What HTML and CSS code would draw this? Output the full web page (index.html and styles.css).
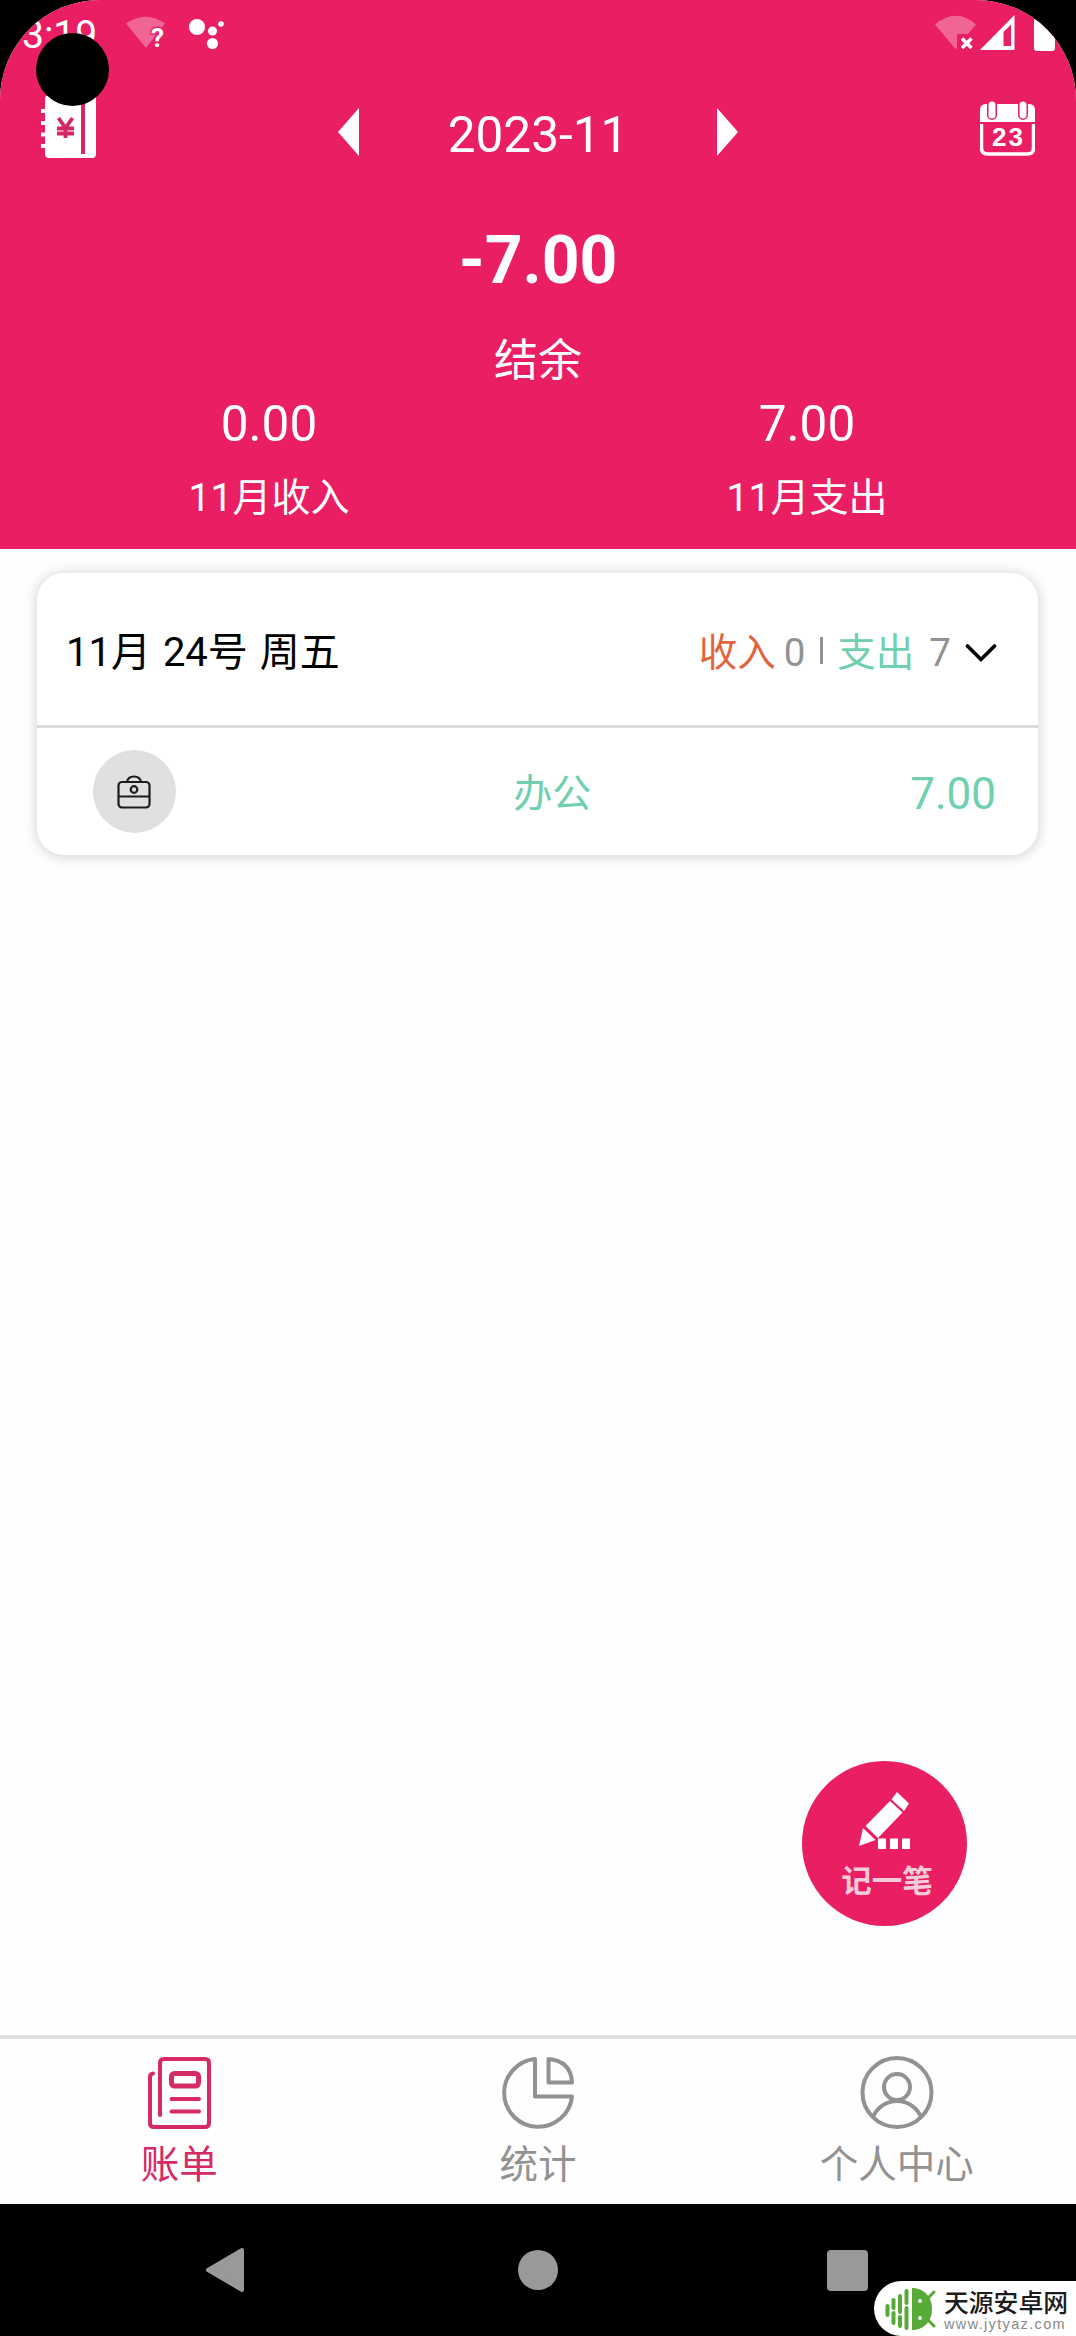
FILE: index.html
```html
<!DOCTYPE html>
<html lang="zh-CN">
<head>
    <meta charset="UTF-8">
    <meta name="viewport" content="width=device-width, initial-scale=1.0">
    <title>账单</title>
    <link rel="stylesheet" href="styles.css">
</head>
<body>
    <div class="screen">
        <header class="header">
            <div class="status-bar">
                <span class="time">3:19</span>
                <svg class="wifi-unknown" width="46" height="44" viewBox="0 0 46 44">
                    <path d="M0 9.500Q20-4 39 9.500L20 34Z" fill="#f16596"/>
                    <text x="25" y="33" class="question">?</text>
                </svg>
                <svg class="dots" width="36" height="32" viewBox="0 0 36 32" fill="#fff">
                    <circle cx="8" cy="9" r="8"/>
                    <circle cx="23.5" cy="13" r="4.5"/>
                    <circle cx="32" cy="6" r="2.8"/>
                    <circle cx="23.5" cy="25.5" r="5.5"/>
                </svg>
                <div class="status-right">
                    <svg width="42" height="36" viewBox="0 0 42 36">
                        <path d="M0 9.500Q21-8 41 9.500L33 19H22V33L20.500 34Z" fill="#f16596"/>
                        <path d="M27 23.500L36.500 33M36.500 23.500L27 33" stroke="#fff" stroke-width="3.600"/>
                    </svg>
                    <svg class="signal" width="35" height="36" viewBox="0 0 35 36">
                        <path fill="#fff" fill-rule="evenodd" d="M0 35L34.500 0V35ZM23.500 17V31H31V9.500Z"/>
                    </svg>
                    <span class="battery"></span>
                </div>
            </div>

            <div class="title-row">
                <svg class="book" width="55" height="63" viewBox="0 0 55 63">
                    <rect x="4" y="0" width="51" height="63" rx="4" fill="#fff"/>
                    <path d="M0 16H8M0 28H8M0 39.500H8M0 51H8" stroke="#fff" stroke-width="4"/>
                    <path d="M42 4V59" stroke="#d42765" stroke-width="4"/>
                    <path d="M17.500 23L24.500 33L31.500 23M16 33.500H33M16 38.500H33M24.500 33V43" fill="none" stroke="#d42765" stroke-width="3.800"/>
                </svg>
                <div class="month-picker">
                    <svg width="21" height="48" viewBox="0 0 21 48"><path d="M0 24L21 0V48Z" fill="#fff"/></svg>
                    <span class="month">2023-11</span>
                    <svg width="21" height="48" viewBox="0 0 21 48"><path d="M21 24L0 0V48Z" fill="#fff"/></svg>
                </div>
                <svg class="calendar" width="55" height="55" viewBox="0 0 55 55">
                    <path d="M0 21V9Q0 3 6 3H49Q55 3 55 9V21Z" fill="#fff"/>
                    <path d="M1.500 23V47Q1.500 53 8 53H47Q53.500 53 53.500 47V23" fill="none" stroke="#fff" stroke-width="3.500"/>
                    <path d="M12 4V14M43 4V14" stroke="#e91e63" stroke-width="10" stroke-linecap="round"/>
                    <path d="M12 4V14M43 4V14" stroke="#fff" stroke-width="7" stroke-linecap="round"/>
                    <text x="28.500" y="44.500" class="calendar-day">23</text>
                </svg>
            </div>

            <div class="balance">-7.00</div>
            <div class="balance-label">结余</div>
            <div class="totals">
                <div class="total">
                    <div class="total-value">0.00</div>
                    <div class="total-label">11月收入</div>
                </div>
                <div class="total">
                    <div class="total-value">7.00</div>
                    <div class="total-label">11月支出</div>
                </div>
            </div>
        </header>

        <main class="content">
            <section class="card">
                <div class="card-head">
                    <span class="date">11月 24号 周五</span>
                    <div class="day-total">
                        <span class="income">收入</span>
                        <span class="income-value">0</span>
                        <span class="separator"></span>
                        <span class="expense">支出</span>
                        <span class="expense-value">7</span>
                        <svg class="chevron" width="32" height="20" viewBox="0 0 32 20"><path d="M2.500 3L16 16.500L29.500 3" fill="none" stroke="#000" stroke-width="3.600" stroke-linecap="round"/></svg>
                    </div>
                </div>
                <div class="record">
                    <div class="record-icon">
                        <svg width="34" height="34" viewBox="0 0 34 34" fill="none" stroke="#1c1c1c" stroke-width="2.200">
                            <rect x="1.500" y="7" width="31" height="25.500" rx="3.500"/>
                            <path d="M1.500 21.500H32.500M10 7Q11 1.500 17 1.500Q23 1.500 24 7"/>
                            <circle cx="17" cy="14.500" r="3.300"/>
                        </svg>
                    </div>
                    <span class="record-name">办公</span>
                    <span class="record-amount">7.00</span>
                </div>
            </section>

            <div class="add-button">
                <svg width="52" height="58" viewBox="0 0 52 58" fill="#fff">
                    <path d="M38 0L50 11.500L45 19L32.500 7.500Z"/>
                    <path d="M31 9L43.500 20.500L19 46L6.500 34Z"/>
                    <path d="M4 36L16.500 48L0 54Z"/>
                    <path d="M19 46.500H27V57H19ZM31 46.500H39V57H31ZM43 46.500H51V57H43Z"/>
                </svg>
                <span class="add-label">记一笔</span>
            </div>
        </main>

        <nav class="tabs">
            <div class="tab active">
                <svg width="74" height="74" viewBox="0 0 74 74" fill="none" stroke="currentColor" stroke-width="4" stroke-linecap="round" stroke-linejoin="round">
                    <path d="M18 60V8Q18 4 22 4H63Q67 4 67 8V68Q67 72 63 72H12Q8 72 8 68V22Q8 19 11 18.500"/>
                    <rect x="29.500" y="18.500" width="27" height="12.500" rx="3" stroke-width="5"/>
                    <path d="M29.500 44H57M29.500 56.500H57"/>
                </svg>
                <span class="tab-label">账单</span>
            </div>
            <div class="tab">
                <svg width="74" height="74" viewBox="0 0 74 74" fill="none" stroke="currentColor" stroke-width="4" stroke-linejoin="round">
                    <path d="M34 4V41.500H71A34 34 0 1 1 34 4Z"/>
                    <path d="M47.500 4V27.500H71Q70 6 47.500 4Z"/>
                </svg>
                <span class="tab-label">统计</span>
            </div>
            <div class="tab">
                <svg width="74" height="74" viewBox="0 0 74 74" fill="none" stroke="currentColor" stroke-width="4">
                    <circle cx="37" cy="37.500" r="34.500"/>
                    <circle cx="37" cy="32" r="13"/>
                    <path d="M13 62A26 26 0 0 1 61 62"/>
                </svg>
                <span class="tab-label">个人中心</span>
            </div>
        </nav>

        <div class="camera"></div>
    </div>

    <footer class="system-nav">
        <svg width="40" height="46" viewBox="0 0 40 46"><path d="M3 23L37 3V43Z" fill="#999" stroke="#999" stroke-width="4" stroke-linejoin="round"/></svg>
        <span class="home"></span>
        <span class="recent"></span>
        <div class="watermark">
            <svg width="52" height="44" viewBox="0 0 52 44">
                <path d="M27 1C40 1 47 11 47 22S40 43 27 43Z" fill="#56aa35"/>
                <path d="M42 12L49 5M42 32L49 39" stroke="#56aa35" stroke-width="3" stroke-linecap="round"/>
                <path d="M2.500 19V28M8.500 13V21M8.500 26V36M15 9V25M15 30V39M21.500 4V16M21.500 21V41" stroke="#56aa35" stroke-width="4" stroke-linecap="round"/>
                <circle cx="35" cy="14" r="2" fill="#fff"/>
                <circle cx="35" cy="31" r="2" fill="#fff"/>
            </svg>
            <div class="watermark-text">
                <span class="site-name">天源安卓网</span>
                <span class="site-url">www.jytyaz.com</span>
            </div>
        </div>
    </footer>
</body>
</html>
```

FILE: styles.css
```css
* {
    box-sizing: border-box;
}
body {
    font-family: Roboto, "Noto Sans CJK SC", sans-serif;
    margin: 0;
    background-color: #000;
    height: 2336px;
    overflow: hidden;
}
svg {
    display: block;
    flex-shrink: 0;
}
.screen {
    position: relative;
    display: flex;
    flex-direction: column;
    height: 2204px;
    background-color: #fefefe;
    border-radius: 100px 100px 0 0;
    overflow: hidden;
}

/* header */
.header {
    height: 549px;
    background-color: #e91e63;
    color: #fff;
    text-align: center;
}
.status-bar {
    display: flex;
    height: 70px;
    padding-left: 22px;
}
.time {
    width: 104px;
    font-size: 39px;
    line-height: 70px;
    text-align: left;
}
.wifi-unknown {
    margin-top: 14px;
}
.question {
    font-size: 26px;
    font-weight: 700;
    fill: #fff;
    stroke: #e91e63;
    stroke-width: 3px;
    paint-order: stroke;
}
.dots {
    margin: 18px 0 0 17px;
}
.status-right {
    display: flex;
    margin: 15px 21px 0 auto;
}
.signal {
    margin-left: 3px;
}
.battery {
    width: 21px;
    height: 33px;
    margin: 3px 0 0 19px;
    background-color: #fff;
    border-radius: 3px;
}
.title-row {
    display: flex;
    justify-content: space-between;
    align-items: center;
    height: 124px;
    padding: 0 41px;
}
.book {
    margin-bottom: 11px;
}
.calendar {
    margin-bottom: 7px;
}
.calendar-day {
    font-family: "Liberation Sans", sans-serif;
    font-size: 26px;
    font-weight: 700;
    letter-spacing: 2px;
    text-anchor: middle;
    fill: #fff;
}
.month-picker {
    display: flex;
    justify-content: space-between;
    align-items: center;
    width: 400px;
}
.month {
    padding-top: 6px;
    font-size: 49.5px;
    line-height: 60px;
}
.balance {
    font-size: 66px;
    font-weight: 700;
    line-height: 134px;
}
.balance-label {
    font-size: 44px;
    line-height: 66px;
}
.totals {
    display: flex;
}
.total {
    flex: 1;
}
.total-value {
    font-size: 49.5px;
    line-height: 60px;
}
.total-label {
    font-size: 39px;
    line-height: 88px;
}

/* bill list */
.content {
    position: relative;
    flex: 1;
    padding: 24px 38px 0 37px;
}
.card {
    height: 282px;
    background-color: #fff;
    border-radius: 27px;
    box-shadow: 0 1px 12px 2px rgba(0, 0, 0, 0.15);
}
.card-head {
    display: flex;
    justify-content: space-between;
    align-items: center;
    height: 155px;
    padding: 7px 41px 0 29px;
    border-bottom: 3px solid #dadada;
}
.date {
    font-size: 40px;
    line-height: 60px;
    word-spacing: 2px;
    color: #000;
}
.day-total {
    display: flex;
    align-items: center;
    font-size: 38.5px;
    line-height: 60px;
    color: #929292;
}
.income {
    color: #e0653f;
}
.income-value {
    margin-left: 8px;
}
.separator {
    width: 3px;
    height: 27px;
    margin: 0 14px 5px 15px;
    background-color: #929292;
}
.expense,
.record {
    color: #6fcfae;
}
.expense-value {
    margin: 0 14px 0 15px;
}
.record {
    display: flex;
    align-items: center;
    height: 127px;
    padding: 0 42px 0 55.5px;
}
.record-icon {
    display: flex;
    justify-content: center;
    align-items: center;
    width: 83px;
    height: 83px;
    background-color: #e0e0e0;
    border-radius: 50%;
}
.record-name {
    flex: 1;
    padding: 4px 0 0 19px;
    font-size: 39px;
    text-align: center;
    line-height: 60px;
}
.record-amount {
    padding-top: 4px;
    font-size: 44px;
    line-height: 60px;
}
.add-button {
    position: absolute;
    right: 109px;
    bottom: 109px;
    display: flex;
    flex-direction: column;
    align-items: center;
    width: 165px;
    height: 165px;
    padding: 31px 0 0 1px;
    background-color: #e91e63;
    border-radius: 50%;
}
.add-label {
    margin-left: 4px;
    font-size: 30.5px;
    font-weight: 700;
    line-height: 64px;
    color: #f8cbd9;
}

/* bottom tabs */
.tabs {
    display: flex;
    height: 169px;
    border-top: 4px solid #e0e0e0;
}
.tab {
    flex: 1;
    display: flex;
    flex-direction: column;
    align-items: center;
    padding-top: 16px;
    color: #929292;
}
.tab.active {
    color: #d62a66;
}
.tab-label {
    font-size: 38.5px;
    line-height: 71px;
}

/* camera cutout */
.camera {
    position: absolute;
    top: 33px;
    left: 36px;
    width: 73px;
    height: 73px;
    background-color: #000;
    border-radius: 50%;
}

.system-nav {
    position: relative;
    display: flex;
    justify-content: space-between;
    align-items: center;
    height: 132px;
    padding: 0 208px 0 205px;
}
.home {
    width: 40px;
    height: 40px;
    margin-left: 3px;
    background-color: #999;
    border-radius: 50%;
}
.recent {
    width: 41px;
    height: 41px;
    background-color: #999;
    border-radius: 4px;
}
.watermark {
    position: absolute;
    right: 0;
    bottom: 0;
    display: flex;
    width: 202px;
    height: 55px;
    padding: 6px 0 0 11px;
    background-color: #fff;
    border-radius: 28px 0 0 28px;
}
.watermark-text {
    display: flex;
    flex-direction: column;
    padding-left: 7px;
}
.site-name {
    font-size: 24.8px;
    font-weight: 500;
    line-height: 34px;
    color: #1c1c1c;
}
.site-url {
    font-family: "Liberation Sans", sans-serif;
    font-size: 14.5px;
    letter-spacing: 1.35px;
    line-height: 7px;
    color: #888;
}
```
